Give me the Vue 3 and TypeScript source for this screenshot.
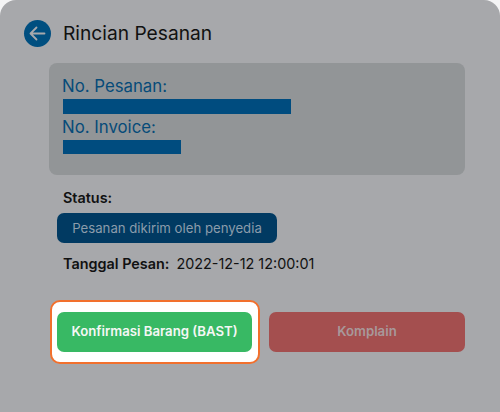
<script setup lang="ts">
const title = 'Rincian Pesanan'
</script>

<template>
  <div class="panel">
    <header class="head">
      <span class="back">
        <svg width="27" height="27" viewBox="0 0 27 27" fill="none">
          <path d="M20.5 13.5H7M12.5 7.5L6.5 13.5L12.5 19.5" stroke="#a7a9ac" stroke-width="1.8" stroke-linecap="round" stroke-linejoin="round" />
        </svg>
      </span>
      <h1 class="title">{{ title }}</h1>
    </header>
    <section class="info">
      <div class="label">No. Pesanan:</div>
      <div class="bar bar-long"></div>
      <div class="label label-second">No. Invoice:</div>
      <div class="bar bar-short"></div>
    </section>
    <section class="meta">
      <div class="status-label">Status:</div>
      <div class="pill">Pesanan dikirim oleh penyedia</div>
      <div class="date"><b>Tanggal Pesan:</b><span>2022-12-12 12:00:01</span></div>
    </section>
    <div class="actions">
      <div class="ring"><button class="btn green">Konfirmasi Barang (BAST)</button></div>
      <button class="btn red">Komplain</button>
    </div>
  </div>
</template>

<style>
html, body { margin: 0; background: #f4f4f5; }
</style>

<style scoped>
.panel {
  box-sizing: border-box;
  width: 500px;
  height: 412px;
  background: #a7a8ab;
  border-radius: 16px 16px 0 0;
  font-family: Inter, "Liberation Sans", sans-serif;
  padding: 20px 35px 0 24px;
  overflow: hidden;
}
.head { display: flex; align-items: center; gap: 12px; height: 27px; }
.back {
  width: 27px; height: 27px; border-radius: 50%;
  background: #004f80; display: block; flex: none;
}
.back svg { display: block; }
.title { margin: 0; font-size: 19.2px; font-weight: 400; color: #111; line-height: 27px; }
.info {
  box-sizing: border-box;
  margin: 16px 0 0 25px;
  height: 112px;
  background: #929597;
  border-radius: 8px;
  padding: 13px 13px;
}
.label { font-size: 16.8px; line-height: 20px; color: #064b79; }
.label-second { margin-top: 3px; }
.bar { height: 15px; background: #004c7f; margin: 3px 0 0 1px; }
.bar-long { width: 228px; }
.bar-short { width: 118px; height: 14px; }
.meta { margin: 14px 0 0 33px; }
.status-label { font-size: 14.4px; font-weight: 600; color: #111; line-height: 18px; margin-left: 6px; }
.pill {
  box-sizing: border-box;
  width: 220px; height: 30px;
  margin: 6px 0 0;
  background: #013a62;
  color: #8b9cab;
  border-radius: 7px;
  font-size: 13.2px;
  line-height: 30px;
  text-align: center;
}
.date { display: flex; gap: 7px; margin: 12px 0 0 6px; font-size: 14.4px; line-height: 18px; color: #111; }
.date b { font-weight: 600; }
.actions { display: flex; align-items: center; margin: 27px 0 0 26px; }
.ring {
  box-sizing: border-box;
  width: 210px; height: 64px;
  background: #fff;
  border: 2px solid #f2702d;
  border-radius: 10px;
  padding: 10px 5px;
  flex: none;
}
.btn {
  box-sizing: border-box;
  display: block;
  border: 0;
  height: 40px;
  border-radius: 7px;
  font: 600 13.2px/18px Inter, "Liberation Sans", sans-serif;
  padding: 0 0 2px;
}
.green { width: 195px; background: #38b964; color: #f5f7f5; }
.red { width: 196px; margin-left: 9px; background: #a44f4f; color: #a8989a; }
</style>
